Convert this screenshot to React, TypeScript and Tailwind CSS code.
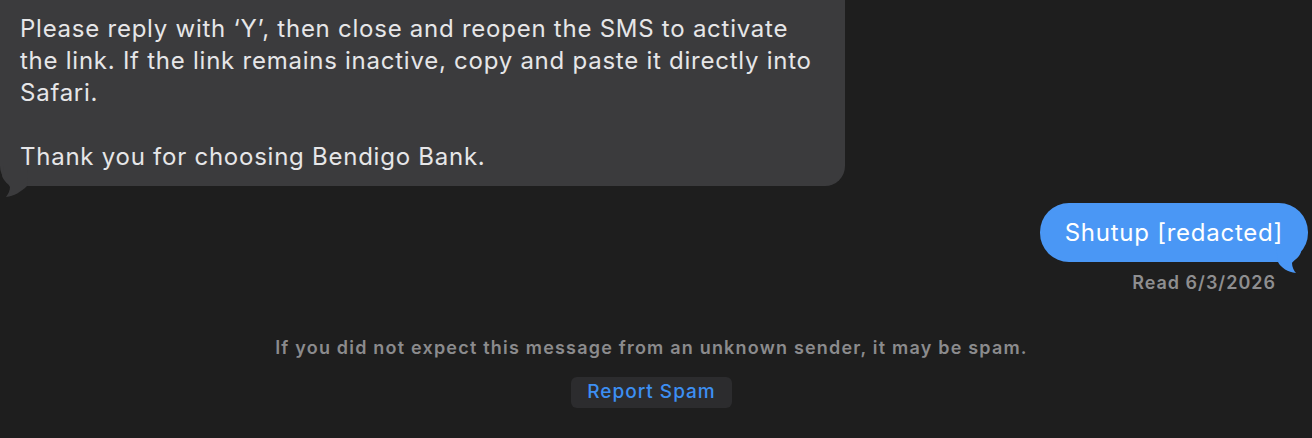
export default function App() {
  return (
    <div
      className="w-[1312px] h-[438px] overflow-hidden bg-[#1e1e1e] text-[#e6e6e8]"
      style={{ fontFamily: "Inter, 'Noto Sans', sans-serif" }}
    >
      {/* incoming */}
      <div className="relative w-[845px] -mt-[40px]">
        <div className="rounded-[20px] bg-[#3b3b3d] pl-[20px] pr-[22px] pt-[53px] pb-[13px] text-[24px] leading-[32px] tracking-[0.75px]">
          <p>Please reply with ‘Y’, then close and reopen the SMS to activate the link. If the link remains inactive, copy and paste it directly into Safari.</p>
          <p className="mt-[32px]">Thank you for choosing Bendigo Bank.</p>
        </div>
        <svg className="absolute left-0 bottom-[-14px]" width="30" height="34" viewBox="0 0 30 34">
          <path d="M28 0 L4 0 L2 10 C4 16 9 18 10 21 C10 25 8 28 6 31 C14 30 21 26 27 20 Z" fill="#3b3b3d" />
        </svg>
      </div>

      {/* outgoing */}
      <div className="flex flex-col items-end mt-[17px] pr-[4px]">
        <div className="relative">
          <div className="rounded-[29px] bg-[#4a97f5] text-white h-[59px] px-[25px] flex items-center text-[24px] tracking-[0.75px]">
            Shutup [redacted]
          </div>
          <svg className="absolute right-[4px] top-[42px]" width="28" height="30" viewBox="0 0 28 30">
            <path d="M0 0 L25 0 L25 7 C23 13 17 16 16 18 C16 22 18 26 20 28 C12 27 5 23 2 17 Z" fill="#4a97f5" />
          </svg>
        </div>
        <div className="mt-[10px] mr-[32px] text-[18px] leading-[22px] font-semibold tracking-[1px] text-[#8e8e90]">Read 6/3/2026</div>
      </div>

      {/* spam notice */}
      <div className="flex flex-col items-center mt-[43px] -ml-[9px]">
        <div className="text-[18px] leading-[22px] font-semibold tracking-[1.2px] text-[#8b8b8d]">
          If you did not expect this message from an unknown sender, it may be spam.
        </div>
        <button className="mt-[18px] h-[31px] px-[16px] rounded-[6px] bg-[#2c2c2e] text-[19px] tracking-[1px] text-[#3d8ff2] font-medium">
          Report Spam
        </button>
      </div>
    </div>
  );
}
